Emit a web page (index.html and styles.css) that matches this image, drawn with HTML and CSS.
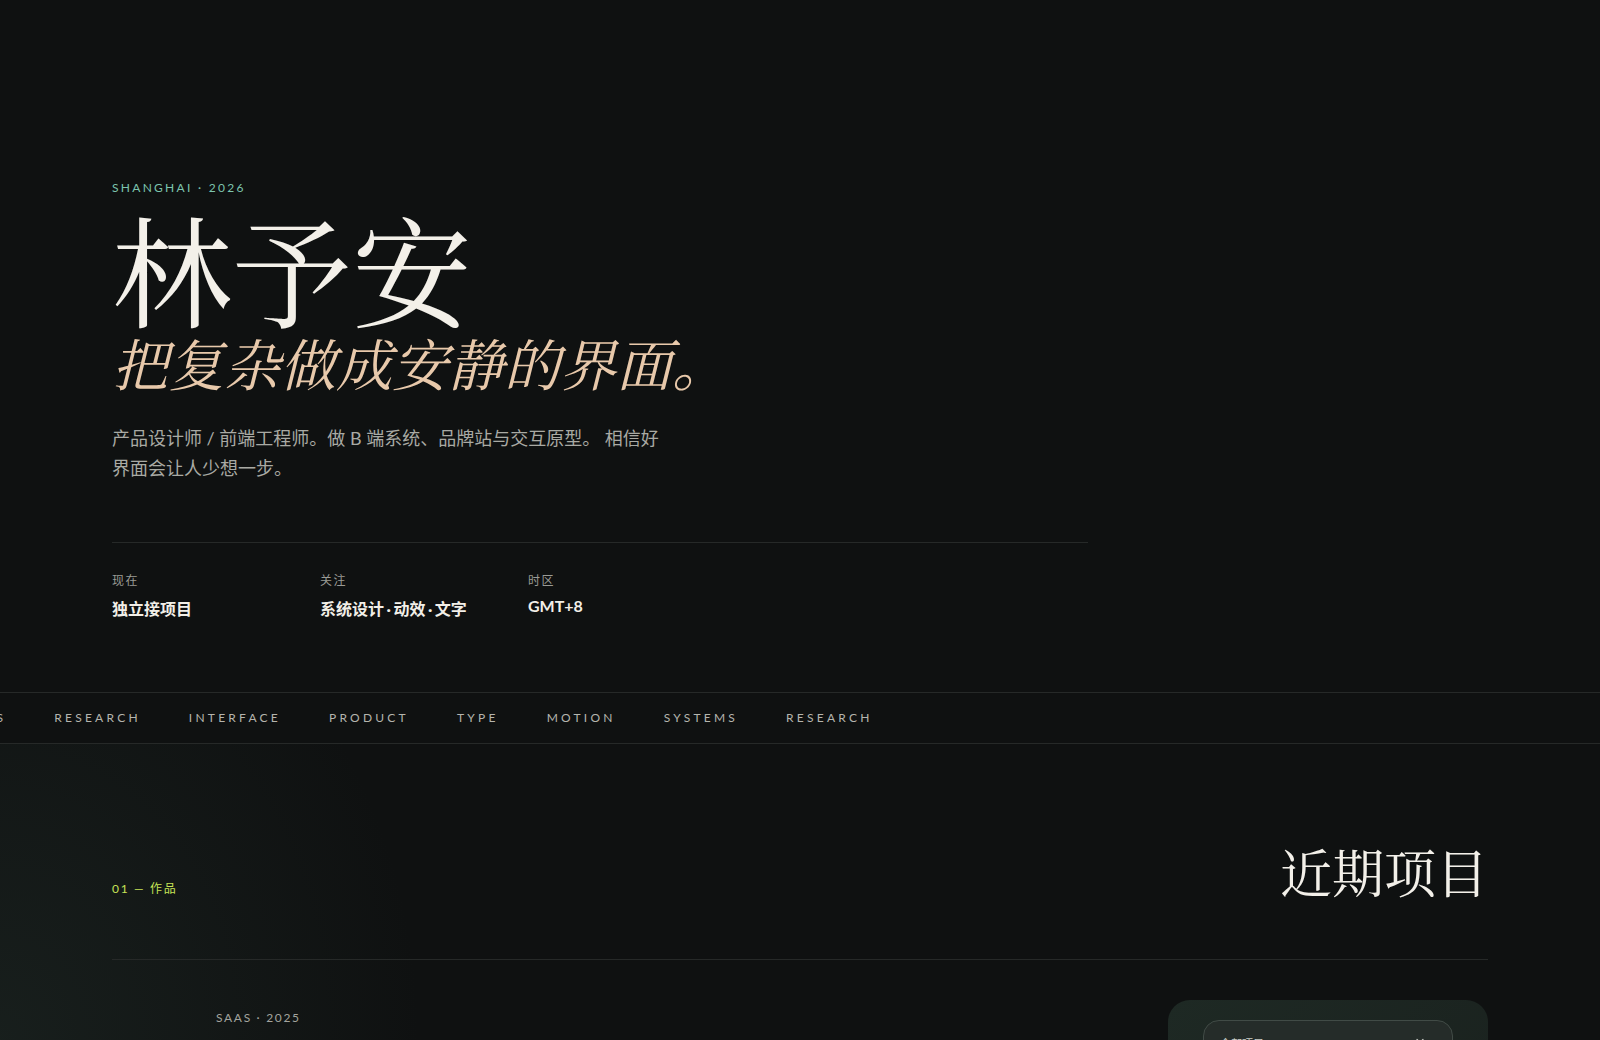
FILE: index.html
```html
<!DOCTYPE html>
<html lang="zh-CN">
<head>
<meta charset="utf-8">
<title>林予安 — 产品设计师 / 前端工程师</title>
<link rel="stylesheet" href="styles.css">
</head>
<body>
<header class="hero">
  <p class="eyebrow">SHANGHAI · 2026</p>
  <h1 class="name">林予安</h1>
  <p class="tagline">把复杂做成安静的界面。</p>
  <p class="intro">产品设计师 / 前端工程师。做 B 端系统、品牌站与交互原型。 相信好界面会让人少想一步。</p>
  <div class="meta">
    <div class="meta-item">
      <span class="meta-label">现在</span>
      <span class="meta-value">独立接项目</span>
    </div>
    <div class="meta-item">
      <span class="meta-label">关注</span>
      <span class="meta-value">系统设计<span class="dot">·</span>动效<span class="dot">·</span>文字</span>
    </div>
    <div class="meta-item">
      <span class="meta-label">时区</span>
      <span class="meta-value">GMT+8</span>
    </div>
  </div>
</header>

<div class="marquee">
  <div class="marquee-track">
    <span>INTERFACE</span><span>PRODUCT</span><span>TYPE</span><span>MOTION</span><span>SYSTEMS</span><span>RESEARCH</span>
    <span>INTERFACE</span><span>PRODUCT</span><span>TYPE</span><span>MOTION</span><span>SYSTEMS</span><span>RESEARCH</span>
  </div>
</div>

<section class="works">
  <div class="works-head">
    <p class="section-label">01 — 作品</p>
    <h2 class="section-title">近期项目</h2>
  </div>
  <article class="project">
    <div class="project-index"></div>
    <div class="project-body">
      <p class="project-tag">SAAS · 2025</p>
    </div>
    <div class="project-card">
      <div class="mock">
        <span class="mock-title">全部项目</span>
        <svg class="mock-icon" width="12" height="12" viewBox="0 0 12 12" fill="none" stroke="#c9ccc6" stroke-width="1.2" stroke-linecap="round"><path d="M3 4.5 6 7.5 9 4.5"/></svg>
      </div>
    </div>
  </article>
</section>
</body>
</html>
```

FILE: styles.css
```css
* { box-sizing: border-box; }

html, body {
  margin: 0;
  padding: 0;
}

body {
  background: #0f1111;
  color: #f2efe8;
  font-family: "Lato", "Noto Sans CJK SC", sans-serif;
  overflow: hidden;
}

p, h1, h2 { margin: 0; }

.hero {
  padding: 180px 112px 0;
}

.eyebrow {
  font-size: 12px;
  line-height: 16px;
  letter-spacing: 0.19em;
  color: #7cc4ae;
}

.name {
  margin-top: 6px;
  font-family: "Noto Serif CJK SC", "Source Han Serif SC", "AR PL UMing CN", serif;
  font-weight: 400;
  font-size: 120px;
  line-height: 130px;
  color: #f3f0e9;
}

.tagline {
  font-family: "Noto Serif CJK SC", "Source Han Serif SC", "AR PL UMing CN", serif;
  font-style: italic;
  font-size: 56px;
  line-height: 1.1;
  color: #e8c9ab;
}

.intro {
  margin-top: 29px;
  max-width: 560px;
  font-family: "Lato", "Noto Sans CJK SC", sans-serif;
  font-size: 18px;
  line-height: 30px;
  color: #a9aaa4;
}

.meta {
  margin-top: 59px;
  width: 976px;
  border-top: 1px solid #262928;
  padding-top: 28px;
  display: grid;
  grid-template-columns: repeat(3, 160px);
  column-gap: 48px;
}

.meta-item {
  display: flex;
  flex-direction: column;
  gap: 8px;
}

.meta-label {
  font-family: "Noto Sans CJK SC", sans-serif;
  font-size: 12px;
  letter-spacing: 0.12em;
  color: #9a9b95;
}

.meta-value {
  font-family: "Lato", "Noto Sans CJK SC", sans-serif;
  font-size: 16px;
  font-weight: 700;
  color: #f2efe8;
  white-space: nowrap;
}

.dot {
  margin: 0 2.5px;
}

.marquee {
  margin-top: 72px;
  height: 52px;
  border-top: 1px solid #262928;
  border-bottom: 1px solid #262928;
  overflow: hidden;
  display: flex;
  align-items: center;
}

.marquee-track {
  display: flex;
  gap: 48px;
  white-space: nowrap;
  transform: translateX(-543px);
  font-size: 12px;
  letter-spacing: 0.27em;
  color: #b5b5ae;
}

.works {
  padding: 96px 112px 0;
  background: radial-gradient(ellipse 420px 520px at 0 60%, rgba(40, 56, 50, 0.35), rgba(15, 17, 17, 0) 100%);
  min-height: 300px;
}

.works-head {
  display: flex;
  justify-content: space-between;
  align-items: baseline;
  padding-bottom: 57px;
  border-bottom: 1px solid #262928;
}

.section-label {
  font-size: 12px;
  letter-spacing: 0.14em;
  color: #c6e356;
}

.section-title {
  font-family: "Noto Serif CJK SC", "Source Han Serif SC", "AR PL UMing CN", serif;
  font-weight: 400;
  font-size: 52px;
  line-height: 1.2;
  color: #f3f0e9;
}

.project {
  display: grid;
  grid-template-columns: 104px 1fr 320px;
  padding-top: 40px;
}

.project-tag {
  margin-top: 10px;
  font-size: 12px;
  letter-spacing: 0.14em;
  color: #a3a49e;
}

.project-card {
  height: 240px;
  border-radius: 22px;
  background: linear-gradient(135deg, #1e2924, #19201d);
  padding: 20px 35px;
}

.mock {
  height: 160px;
  border: 1px solid #414b46;
  border-radius: 16px;
  background: #252c29;
  padding: 14px 26px 14px 16px;
  display: flex;
  justify-content: space-between;
  align-items: flex-start;
}

.mock-title {
  font-family: "Noto Sans CJK SC", sans-serif;
  font-size: 11px;
  color: #c9ccc6;
}
```
